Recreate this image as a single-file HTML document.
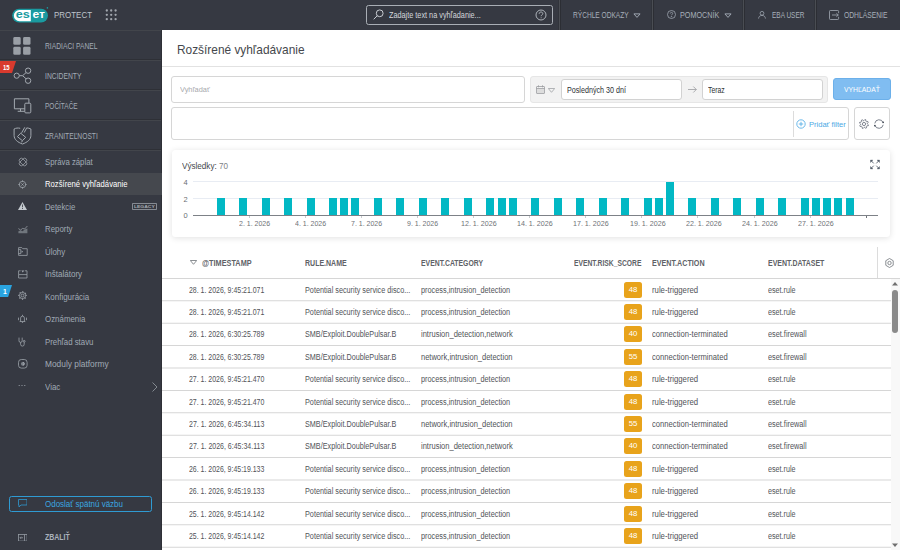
<!DOCTYPE html>
<html><head><meta charset="utf-8">
<style>
*{box-sizing:border-box;margin:0;padding:0}
html,body{width:900px;height:550px;overflow:hidden;background:#fff;font-family:"Liberation Sans",sans-serif}
.abs{position:absolute}
.t{position:absolute;white-space:nowrap;line-height:1}
#top{position:absolute;left:0;top:0;width:900px;height:30px;background:#363942}
#side{position:absolute;left:0;top:30px;width:162px;height:520px;background:#363942}
.tb{color:#a7afb9;font-size:8.8px}
.vd{position:absolute;top:0;width:1px;height:30px;background:#4a4d53;box-shadow:1px 0 0 #2c2e34,-1px 0 0 #31343b}
.sep{position:absolute;left:0;width:161px;height:1px;background:#2e3036}
.mi{color:#a3acb6;font-size:8.4px}
.si{color:#a0aab5;font-size:8.8px}
.ic{position:absolute}
.row{position:absolute;left:162px;width:729px;height:1px;background:#d6d6d6}
.cell{position:absolute;white-space:nowrap;line-height:1;font-size:8.3px;color:#515358}
.hd{position:absolute;white-space:nowrap;line-height:1;font-size:8.3px;font-weight:bold;color:#606267}
.badge{position:absolute;left:624px;width:18px;height:16px;border-radius:2.5px;background:#e8a31b;color:#fff;font-size:7.8px;text-align:center;line-height:16px}
.bar{position:absolute;width:8px;background:#02b8c4}
.xl{position:absolute;white-space:nowrap;line-height:1;font-size:7.3px;color:#6f7277;top:220.3px}
</style></head><body>
<!-- TOP BAR -->
<div id="top">
  <!-- eset logo -->
  <svg class="ic" style="left:12px;top:6.5px" width="37" height="16" viewBox="0 0 37 16">
    <rect x="0.2" y="1.7" width="35.8" height="13.8" rx="6.9" fill="#1a9aa0"/>
    <path d="M7.4 3.1H18.8V14.2H7.4A5.55 5.55 0 0 1 7.4 3.1z" fill="#fff"/>
    <circle cx="35.4" cy="0.9" r="0.8" fill="#1a9aa0"/>
    <text x="3.8" y="11.4" font-family="Liberation Sans" font-weight="bold" font-size="11.5" fill="#1a9aa0" textLength="14.1" lengthAdjust="spacingAndGlyphs">es</text>
    <text x="20.4" y="11.4" font-family="Liberation Sans" font-weight="bold" font-size="11.5" fill="#fff" textLength="12.6" lengthAdjust="spacingAndGlyphs">eт</text>
  </svg>
  <div class="t tb" style="transform:scaleX(0.9254);transform-origin:0 0;left:53.7px;top:10.8px;font-size:8.6px;color:#bfc4cb">PROTECT</div>
  <svg class="ic" style="left:105px;top:9px" width="12" height="12" viewBox="0 0 12 12" fill="#a2a7ae"><circle cx="1.8" cy="1.50" r="1.15"/><circle cx="6.2" cy="1.50" r="1.15"/><circle cx="10.6" cy="1.50" r="1.15"/><circle cx="1.8" cy="5.85" r="1.15"/><circle cx="6.2" cy="5.85" r="1.15"/><circle cx="10.6" cy="5.85" r="1.15"/><circle cx="1.8" cy="10.20" r="1.15"/><circle cx="6.2" cy="10.20" r="1.15"/><circle cx="10.6" cy="10.20" r="1.15"/></svg>
  <!-- search -->
  <div class="abs" style="left:366px;top:5px;width:187px;height:20px;border:1px solid #a9aeb5;border-radius:2.5px"></div>
  <svg class="ic" style="left:373px;top:8.5px" width="11" height="11" viewBox="0 0 11 11" fill="none" stroke="#c8ccd2" stroke-width="1">
    <circle cx="6.7" cy="4.3" r="3.4"/><path d="M4.3 6.7L0.7 10.3"/>
  </svg>
  <div class="t tb" style="transform:scaleX(0.8288);transform-origin:0 0;left:389px;top:11px;color:#d3d7dc">Zadajte text na vyhľadanie...</div>
  <svg class="ic" style="left:535px;top:8.8px" width="12" height="12" viewBox="0 0 12 12" fill="none" stroke="#b9bec5" stroke-width=".9"><circle cx="6" cy="6" r="5"/><path d="M4.2 4.8c0-1.1.8-1.8 1.8-1.8s1.8.7 1.8 1.6c0 1.3-1.7 1.3-1.7 2.6"/><circle cx="6.1" cy="8.8" r=".5" fill="#b9bec5" stroke="none"/></svg>
  <div class="vd" style="left:559px"></div>
  <div class="t tb" style="transform:scaleX(0.7495);transform-origin:0 0;left:572.7px;top:11px">RÝCHLE ODKAZY</div>
  <svg class="ic" style="left:632.5px;top:12.5px" width="8" height="6" viewBox="0 0 8 6" fill="none" stroke="#9ea6b0" stroke-width="1"><path d="M.9 .9h6.2L4 4.4z"/></svg>
  <div class="vd" style="left:652px"></div>
  <svg class="ic" style="left:666.5px;top:10.3px" width="9" height="9" viewBox="0 0 9 9" fill="none" stroke="#9ea6b0" stroke-width=".8">
    <circle cx="4.5" cy="4.5" r="4"/><path d="M3.3 3.5c0-.7.5-1.1 1.2-1.1s1.2.4 1.2 1c0 .9-1.1.9-1.1 1.8"/><circle cx="4.5" cy="6.6" r=".3" fill="#b4bcc6"/>
  </svg>
  <div class="t tb" style="transform:scaleX(0.8183);transform-origin:0 0;left:680.4px;top:11px">POMOCNÍK</div>
  <svg class="ic" style="left:723.5px;top:12.5px" width="8" height="6" viewBox="0 0 8 6" fill="none" stroke="#9ea6b0" stroke-width="1"><path d="M.9 .9h6.2L4 4.4z"/></svg>
  <div class="vd" style="left:743px"></div>
  <svg class="ic" style="left:758px;top:11px" width="8" height="8" viewBox="0 0 8 8" fill="none" stroke="#a3abb5" stroke-width=".75"><circle cx="4" cy="2.3" r="1.9"/><path d="M.6 7.6c0-1.9 1.4-3.2 3.4-3.2s3.4 1.3 3.4 3.2"/></svg>
  <div class="t tb" style="transform:scaleX(0.7361);transform-origin:0 0;left:771.6px;top:11px">EBA USER</div>
  <div class="vd" style="left:815px"></div>
  <svg class="ic" style="left:828.7px;top:9.8px" width="11" height="10" viewBox="0 0 11 10" fill="none" stroke="#a3abb5" stroke-width=".8"><path d="M9.6 3.2V1.3a.8.8 0 0 0-.8-.8H1.3a.8.8 0 0 0-.8.8v7.4a.8.8 0 0 0 .8.8h7.5a.8.8 0 0 0 .8-.8V6.8"/><path d="M3 5h6.3M7.4 3.3L9.3 5 7.4 6.7"/></svg>
  <div class="t tb" style="transform:scaleX(0.7669);transform-origin:0 0;left:843.8px;top:11px">ODHLÁSENIE</div>
</div>

<!-- SIDEBAR -->
<div id="side"></div>
<div class="sep" style="top:30px;background:#42454b"></div>
<div class="sep" style="top:59px"></div><div class="sep" style="top:60px;background:#42454b"></div>
<div class="sep" style="top:89px"></div><div class="sep" style="top:90px;background:#42454b"></div>
<div class="sep" style="top:119px"></div><div class="sep" style="top:120px;background:#42454b"></div>
<div class="sep" style="top:149px"></div><div class="sep" style="top:150px;background:#42454b"></div>
<div class="abs" style="left:161px;top:30px;width:1px;height:520px;background:#2e3036"></div>
<!-- main items -->
<svg class="ic" style="left:13.2px;top:37px" width="18" height="18" viewBox="0 0 18 18" fill="#9a9fa6">
  <rect x="0.3" y="0" width="7.4" height="7.8" rx="1.4"/><rect x="10.1" y="0" width="7.4" height="7.8" rx="1.4"/><rect x="0.3" y="9.8" width="7.4" height="8" rx="1.4"/><rect x="10.1" y="9.8" width="7.4" height="8" rx="1.4"/>
</svg>
<div class="t mi" style="transform:scaleX(0.8019);transform-origin:0 0;left:44.7px;top:41.5px">RIADIACI PANEL</div>
<svg class="ic" style="left:10px;top:64px" width="24" height="24" viewBox="0 0 24 24" fill="none" stroke="#a3a9b0" stroke-width="1">
  <circle cx="6.7" cy="11.7" r="2.6"/><circle cx="18.1" cy="6.7" r="2.7"/><circle cx="18.1" cy="16.7" r="2.7"/><path d="M9.3 11.7h3.3L16.1 8.6M12.6 11.7l3.5 3.1"/>
</svg>
<div class="abs" style="left:0;top:60.9px;width:16px;height:12.2px;background:#d83a2e;clip-path:polygon(0 0,100% 0,75% 100%,0 100%)"></div>
<div class="t" style="left:2.8px;top:64.1px;font-size:7px;font-weight:bold;color:#fff;transform:scaleX(.85);transform-origin:0 0">15</div>
<div class="t mi" style="transform:scaleX(0.8064);transform-origin:0 0;left:44.7px;top:71.5px">INCIDENTY</div>
<svg class="ic" style="left:13px;top:97px" width="19" height="17" viewBox="0 0 19 17" fill="none" stroke="#a3a9b0" stroke-width="1">
  <path d="M11.8 11.8H1.4V1.8h14.5v4.4"/><path d="M7.5 11.8v2.5M4.7 14.3h7"/><rect x="11.8" y="6.2" width="6" height="9.7" rx="1"/>
</svg>
<div class="t mi" style="transform:scaleX(0.7748);transform-origin:0 0;left:44.7px;top:101.5px">POČÍTAČE</div>
<svg class="ic" style="left:13px;top:126px" width="19" height="19" viewBox="0 0 19 19" fill="none" stroke="#a3a9b0" stroke-width="1">
  <path d="M7.2 2.3C5 1.8 2.8 2 1.1 3v6.4c0 4.2 3.6 6.9 8.4 8.6 4.8-1.7 8.4-4.4 8.4-8.6V3c-1.3-.7-2.8-1-4.2-1.1L11.2 6.5"/><path d="M11.8 1.3L8.6 6.8"/>
  <path d="M4.4 10.6L7.7 7.2l5 4.1-3.3 3.4z"/><path d="M9.4 14.7l-.8 1.6"/>
</svg>
<div class="t mi" style="transform:scaleX(0.7991);transform-origin:0 0;left:44.7px;top:131.5px">ZRANITEĽNOSTI</div>

<!-- selected -->
<div class="abs" style="left:0;top:173.4px;width:162px;height:22px;background:#45484e"></div>

<!-- sub items -->
<svg class="ic" style="left:17.5px;top:156.5px" width="10" height="10" viewBox="0 0 10 10" fill="none" stroke="#a3a9b0" stroke-width=".7"><rect x=".6" y="2.9" width="8.8" height="4.2" rx="2.1" transform="rotate(45 5 5)"/><rect x=".6" y="2.9" width="8.8" height="4.2" rx="2.1" transform="rotate(-45 5 5)"/></svg>
<div class="t si" style="transform:scaleX(0.8867);transform-origin:0 0;left:44.8px;top:158px">Správa záplat</div>
<svg class="ic" style="left:17.8px;top:179.5px" width="9" height="9" viewBox="0 0 9 9" fill="none" stroke="#a3a9b0" stroke-width=".75"><circle cx="4.5" cy="4.5" r="3.2"/><path d="M4.5 .3v1.6M4.5 7.1v1.6M.3 4.5h1.6M7.1 4.5h1.6M3.4 3.4l2.2 2.2M5.6 3.4L3.4 5.6"/></svg>
<div class="t si" style="transform:scaleX(0.8730);transform-origin:0 0;left:44.8px;top:180px;color:#fff">Rozšírené vyhľadávanie</div>
<svg class="ic" style="left:18px;top:202px" width="9" height="8" viewBox="0 0 9 8" fill="#c4c9cf"><path d="M4.5 0L9 8H0z"/><path d="M4.1 2.5h.8v2.8h-.8zM4.1 6h.8v.9h-.8z" fill="#34373d"/></svg>
<div class="t si" style="transform:scaleX(0.8851);transform-origin:0 0;left:44.8px;top:202.5px">Detekcie</div>
<div class="abs" style="left:132px;top:203px;width:25px;height:7.2px;border:.8px solid #858a92;border-radius:.8px"></div>
<div class="t" style="transform:scaleX(1.1313);transform-origin:0 0;left:133.8px;top:204.9px;font-size:4.4px;font-weight:bold;color:#a6abb2">LEGACY</div>
<svg class="ic" style="left:17.8px;top:224.5px" width="10" height="9" viewBox="0 0 10 9" fill="none" stroke="#a3a9b0" stroke-width=".7"><path d="M.4 3.6l2.2 1.4 2-1.6 2 .6 2.8-3"/><path d="M.4 8.3V6.2l2.2-1 2 1 2-1.6 2.8-1.2v4.9z" fill="#70767d" stroke="none"/></svg>
<div class="t si" style="transform:scaleX(0.8925);transform-origin:0 0;left:44.8px;top:225px">Reporty</div>
<svg class="ic" style="left:17.8px;top:247px" width="10" height="9" viewBox="0 0 10 9" fill="none" stroke="#a3a9b0" stroke-width=".75"><path d="M.6 .6h3.2l1 1.1h4.4v6.7H.6z"/><path d="M.6 2.6h2.2v4H.6"/><path d="M3.6 3.6v2.2l1.5-1.1z" fill="#a3a9b0" stroke="none"/></svg>
<div class="t si" style="transform:scaleX(0.8978);transform-origin:0 0;left:44.8px;top:247.5px">Úlohy</div>
<svg class="ic" style="left:17.8px;top:269.5px" width="10" height="9" viewBox="0 0 10 9" fill="none" stroke="#a3a9b0" stroke-width=".75"><path d="M.6 4.6V.8h2M6.8 .8h2.2v3.8M.6 4.6h8.4v3.4H.6z"/><path d="M3.4 .6h2.8L4.8 2.4z" fill="#a3a9b0" stroke="none"/></svg>
<div class="t si" style="transform:scaleX(0.9139);transform-origin:0 0;left:44.8px;top:270px">Inštalátory</div>
<div class="abs" style="left:0;top:284.9px;width:12px;height:12.4px;background:#2aa4e0;clip-path:polygon(0 0,100% 0,67% 100%,0 100%)"></div>
<div class="t" style="left:3.1px;top:288.6px;font-size:6.8px;font-weight:bold;color:#fff">1</div>
<svg class="ic" style="left:17.5px;top:291.3px" width="9" height="9" viewBox="0 0 9 9" fill="none" stroke="#a3a9b0"><circle cx="4.5" cy="4.5" r="3.1" stroke-width=".75"/><circle cx="4.5" cy="4.5" r="3.7" stroke-width="1.1" stroke-dasharray="1.1 1.806" transform="rotate(-11 4.5 4.5)"/><circle cx="4.5" cy="4.5" r="1.4" stroke-width=".75"/></svg>
<div class="t si" style="transform:scaleX(0.9058);transform-origin:0 0;left:44.8px;top:292.5px">Konfigurácia</div>
<svg class="ic" style="left:18px;top:313.5px" width="9" height="9" viewBox="0 0 9 9" fill="none" stroke="#a3a9b0" stroke-width=".75"><path d="M2.6 6.9V4.1a1.9 1.9 0 0 1 3.8 0v2.8l.8.6H1.8z"/><path d="M4.5 .8v1.3M3.9 8.4h1.2M.5 3.6v2.6M8.5 3.6v2.6"/></svg>
<div class="t si" style="transform:scaleX(0.8978);transform-origin:0 0;left:44.8px;top:315px">Oznámenia</div>
<svg class="ic" style="left:18px;top:336.5px" width="9" height="10" viewBox="0 0 9 10" fill="none" stroke="#a3a9b0" stroke-width=".75"><path d="M1 .6v3.2a1.6 1.6 0 0 0 3.2 0V.6M2.6 5.4v1.9a1.8 1.8 0 0 0 3.6 0V5.2"/><circle cx="6.2" cy="4.3" r=".9"/></svg>
<div class="t si" style="transform:scaleX(0.8896);transform-origin:0 0;left:44.8px;top:337.5px">Prehľad stavu</div>
<svg class="ic" style="left:17.6px;top:358.7px" width="10" height="10" viewBox="0 0 10 10" fill="none" stroke="#a3a9b0" stroke-width=".75"><rect x=".5" y=".5" width="8.6" height="8.6" rx="2.8"/><circle cx="4.8" cy="4.8" r="1.9" fill="#7d838b" stroke="none"/><path d="M4.9 3.4a1.3 1.3 0 0 1 0 2.8" stroke="#c5cad0" stroke-width=".6"/></svg>
<div class="t si" style="transform:scaleX(0.9510);transform-origin:0 0;left:44.8px;top:360px">Moduly platformy</div>
<svg class="ic" style="left:18px;top:384px" width="8" height="3" viewBox="0 0 8 3" fill="#a3a9b0"><circle cx="1.2" cy="1.5" r=".6"/><circle cx="4" cy="1.5" r=".6"/><circle cx="6.8" cy="1.5" r=".6"/></svg>
<div class="t si" style="transform:scaleX(0.9017);transform-origin:0 0;left:44.8px;top:382.5px">Viac</div>
<svg class="ic" style="left:151.5px;top:381.5px" width="6" height="10" viewBox="0 0 6 10" fill="none" stroke="#8d939a" stroke-width=".9"><path d="M.5 .5L5 5 .5 9.5"/></svg>

<!-- feedback -->
<div class="abs" style="left:9.2px;top:496.2px;width:143px;height:15.8px;border:1px solid #2f9bd3;border-radius:2.5px"></div>
<svg class="ic" style="left:17.8px;top:499.4px" width="9.5" height="8.5" viewBox="0 0 9.5 8.5" fill="none" stroke="#2f9bd3" stroke-width=".8"><path d="M.5 .5h8.5v5.5H3L1 8V6H.5z"/></svg>
<div class="t" style="transform:scaleX(0.9075);transform-origin:0 0;left:44.9px;top:500px;font-size:8.8px;color:#3ba7e0">Odoslať spätnú väzbu</div>
<!-- collapse -->
<svg class="ic" style="left:17.8px;top:533.8px" width="9.5" height="7.5" viewBox="0 0 9.5 7.5" fill="none" stroke="#959ba3" stroke-width=".8"><rect x=".4" y=".4" width="8.7" height="6.7"/><path d="M6.5 .4v6.7M2 3.75h3M3 2.7L2 3.75 3 4.8"/></svg>
<div class="t" style="transform:scaleX(0.8327);transform-origin:0 0;left:44.9px;top:533px;font-size:8.4px;font-weight:bold;color:#aab2bc">ZBALIŤ</div>

<!-- MAIN -->
<div class="abs" style="left:162px;top:30px;width:738px;height:520px;background:#fff"></div>
<div class="t" style="transform:scaleX(0.9130);transform-origin:0 0;left:176.5px;top:42.5px;font-size:13px;color:#45474c">Rozšírené vyhľadávanie</div>
<div class="abs" style="left:162px;top:66px;width:738px;height:1px;background:#e2e2e2"></div>

<div class="abs" style="left:171px;top:76px;width:353.5px;height:26.5px;border:1px solid #d6d6d6;border-radius:3px"></div>
<div class="t" style="transform:scaleX(0.9723);transform-origin:0 0;left:180px;top:86px;font-size:7.6px;color:#a7a9ad">Vyhľadať</div>

<div class="abs" style="left:530px;top:76px;width:298px;height:26.5px;background:#f2f2f2;border:1px solid #e6e6e6;border-radius:3px"></div>
<svg class="ic" style="left:536px;top:85px" width="9" height="9" viewBox="0 0 9 9" fill="none" stroke="#9a9ca0" stroke-width=".8"><rect x=".5" y="1.5" width="8" height="7" rx=".5"/><path d="M.5 3.5h8M2.5 .3v2M6.5 .3v2"/><rect x="1" y="4" width="7" height="4" fill="#ddd" stroke="none"/></svg>
<svg class="ic" style="left:548px;top:87.5px" width="7" height="5" viewBox="0 0 7 5" fill="none" stroke="#a0a2a6" stroke-width=".8"><path d="M.3 .5h6.4L3.5 4.3z"/></svg>
<div class="abs" style="left:561px;top:79.3px;width:121px;height:20.3px;background:#fff;border:1px solid #d2d2d2;border-radius:3px"></div>
<div class="t" style="transform:scaleX(0.8343);transform-origin:0 0;left:566.5px;top:85.8px;font-size:8.6px;color:#2d2f33">Posledných 30 dní</div>
<svg class="ic" style="left:688px;top:86px" width="9" height="7" viewBox="0 0 9 7" fill="none" stroke="#9a9ca0" stroke-width=".8"><path d="M0 3.5h8.3M5.3.5l3 3-3 3"/></svg>
<div class="abs" style="left:702px;top:79.3px;width:120.5px;height:20.3px;background:#fff;border:1px solid #d2d2d2;border-radius:3px"></div>
<div class="t" style="transform:scaleX(0.7946);transform-origin:0 0;left:708px;top:85.8px;font-size:8.6px;color:#2d2f33">Teraz</div>

<div class="abs" style="left:832.5px;top:78.3px;width:58px;height:22.2px;background:#80bdf1;border:1px solid #6cb0ea;border-radius:3px"></div>
<div class="t" style="transform:scaleX(0.8929);transform-origin:0 0;left:843.5px;top:85.5px;font-size:7.6px;color:#fff">VYHĽADAŤ</div>

<div class="abs" style="left:171px;top:107px;width:677.5px;height:32.5px;border:1px solid #d6d6d6;border-radius:3px"></div>
<div class="abs" style="left:793px;top:111px;width:1px;height:26px;background:#dcdcdc"></div>
<svg class="ic" style="left:796px;top:118.7px" width="10" height="10" viewBox="0 0 10 10" fill="none" stroke="#4aa8e4" stroke-width=".8"><circle cx="5" cy="5" r="4.2"/><path d="M5 2.8v4.4M2.8 5h4.4"/></svg>
<div class="t" style="transform:scaleX(0.9676);transform-origin:0 0;left:808.5px;top:120.5px;font-size:7.8px;color:#4aa8e4">Pridať filter</div>
<div class="abs" style="left:854px;top:107px;width:36px;height:32.5px;border:1px solid #d6d6d6;border-radius:3px"></div>
<svg class="ic" style="left:858.4px;top:117.5px" width="12" height="12" viewBox="0 0 12 12" fill="none" stroke="#5b6270" stroke-width=".75"><path d="M6.00 2.60L6.90 1.49L7.76 1.75L7.89 3.17L8.40 3.60L9.82 3.44L10.25 4.24L9.33 5.34L9.40 6.00L10.51 6.90L10.25 7.76L8.83 7.89L8.40 8.40L8.56 9.82L7.76 10.25L6.66 9.33L6.00 9.40L5.10 10.51L4.24 10.25L4.11 8.83L3.60 8.40L2.18 8.56L1.75 7.76L2.67 6.66L2.60 6.00L1.49 5.10L1.75 4.24L3.17 4.11L3.60 3.60L3.44 2.18L4.24 1.75L5.34 2.67z"/><circle cx="6" cy="6" r="1.6"/></svg>
<svg class="ic" style="left:873.4px;top:117.5px" width="12" height="12" viewBox="0 0 12 12" fill="none" stroke="#5b6270" stroke-width=".8"><path d="M1.8 5.4A4.3 4.3 0 0 1 10.1 4.6M10.2 6.8A4.3 4.3 0 0 1 1.9 7.4"/><rect x="9.4" y="3.6" width="1.5" height="1.5" fill="#3f4652" stroke="none"/><rect x="1.1" y="6.9" width="1.5" height="1.5" fill="#3f4652" stroke="none"/></svg>

<!-- CHART CARD -->
<div class="abs" style="left:172px;top:150px;width:718px;height:86.5px;border-radius:3.5px;background:#fff;box-shadow:0 1px 6px rgba(0,0,0,.12)"></div>
<div class="t" style="transform:scaleX(0.9220);transform-origin:0 0;left:181.7px;top:162px;font-size:8.8px;color:#44464b">Výsledky: <span style="color:#808287">70</span></div>
<svg class="ic" style="left:866px;top:156px" width="18" height="18" viewBox="0 0 18 18" fill="#56606c" stroke="#56606c" stroke-width=".9"><path d="M5.2 4.7L7.7 7.4M12.8 4.7L10.3 7.4M5.2 12.3L7.7 9.7M12.8 12.3L10.3 9.7" fill="none"/><path d="M4.5 4.1h2.4L4.5 6.5z M13.5 4.1h-2.4l2.4 2.4z M4.5 12.9h2.4L4.5 10.5z M13.5 12.9h-2.4l2.4-2.4z" stroke-width=".4"/></svg>
<div class="t" style="left:183.5px;top:179px;font-size:7.5px;color:#6b6e73">4</div>
<div class="t" style="left:183.5px;top:195.5px;font-size:7.5px;color:#6b6e73">2</div>
<div class="t" style="left:183.5px;top:211.5px;font-size:7.5px;color:#6b6e73">0</div>
<div class="abs" style="left:192.5px;top:181px;width:685.5px;height:1px;background:#e8ecf3"></div>
<div class="abs" style="left:192.5px;top:198px;width:685.5px;height:1px;background:#e8ecf3"></div>
<div class="bar" style="left:216.70px;top:198.2px;height:16.70px"></div>
<div class="bar" style="left:239.16px;top:198.2px;height:16.70px"></div>
<div class="bar" style="left:261.63px;top:198.2px;height:16.70px"></div>
<div class="bar" style="left:284.09px;top:198.2px;height:16.70px"></div>
<div class="bar" style="left:306.56px;top:198.2px;height:16.70px"></div>
<div class="bar" style="left:329.02px;top:198.2px;height:16.70px"></div>
<div class="bar" style="left:340.25px;top:198.2px;height:16.70px"></div>
<div class="bar" style="left:351.48px;top:198.2px;height:16.70px"></div>
<div class="bar" style="left:373.95px;top:198.2px;height:16.70px"></div>
<div class="bar" style="left:396.41px;top:198.2px;height:16.70px"></div>
<div class="bar" style="left:418.88px;top:198.2px;height:16.70px"></div>
<div class="bar" style="left:441.34px;top:198.2px;height:16.70px"></div>
<div class="bar" style="left:463.80px;top:198.2px;height:16.70px"></div>
<div class="bar" style="left:486.27px;top:198.2px;height:16.70px"></div>
<div class="bar" style="left:497.50px;top:198.2px;height:16.70px"></div>
<div class="bar" style="left:508.73px;top:198.2px;height:16.70px"></div>
<div class="bar" style="left:531.20px;top:198.2px;height:16.70px"></div>
<div class="bar" style="left:553.66px;top:198.2px;height:16.70px"></div>
<div class="bar" style="left:576.12px;top:198.2px;height:16.70px"></div>
<div class="bar" style="left:598.59px;top:198.2px;height:16.70px"></div>
<div class="bar" style="left:621.05px;top:198.2px;height:16.70px"></div>
<div class="bar" style="left:643.52px;top:198.2px;height:16.70px"></div>
<div class="bar" style="left:654.75px;top:198.2px;height:16.70px"></div>
<div class="bar" style="left:665.98px;top:181.7px;height:33.20px"></div>
<div class="bar" style="left:688.44px;top:198.2px;height:16.70px"></div>
<div class="bar" style="left:710.91px;top:198.2px;height:16.70px"></div>
<div class="bar" style="left:733.37px;top:198.2px;height:16.70px"></div>
<div class="bar" style="left:755.84px;top:198.2px;height:16.70px"></div>
<div class="bar" style="left:778.30px;top:198.2px;height:16.70px"></div>
<div class="bar" style="left:800.76px;top:198.2px;height:16.70px"></div>
<div class="bar" style="left:812.00px;top:198.2px;height:16.70px"></div>
<div class="bar" style="left:823.23px;top:198.2px;height:16.70px"></div>
<div class="bar" style="left:834.46px;top:198.2px;height:16.70px"></div>
<div class="bar" style="left:845.69px;top:198.2px;height:16.70px"></div>
<div class="abs" style="left:192.5px;top:214.5px;width:685.5px;height:1px;background:#7d8187"></div>
<div class="xl" style="transform:scaleX(0.9578);transform-origin:0 0;left:239.05px">2. 1. 2026</div>
<div class="abs" style="left:248.60px;top:215.5px;width:1px;height:2px;background:#c9cbce"></div>
<div class="xl" style="transform:scaleX(0.9578);transform-origin:0 0;left:295.15px">4. 1. 2026</div>
<div class="abs" style="left:304.70px;top:215.5px;width:1px;height:2px;background:#c9cbce"></div>
<div class="xl" style="transform:scaleX(0.9578);transform-origin:0 0;left:351.25px">7. 1. 2026</div>
<div class="abs" style="left:360.80px;top:215.5px;width:1px;height:2px;background:#c9cbce"></div>
<div class="xl" style="transform:scaleX(0.9578);transform-origin:0 0;left:407.35px">9. 1. 2026</div>
<div class="abs" style="left:416.90px;top:215.5px;width:1px;height:2px;background:#c9cbce"></div>
<div class="xl" style="transform:scaleX(0.9745);transform-origin:0 0;left:461.20px">12. 1. 2026</div>
<div class="abs" style="left:473.00px;top:215.5px;width:1px;height:2px;background:#c9cbce"></div>
<div class="xl" style="transform:scaleX(0.9745);transform-origin:0 0;left:517.30px">14. 1. 2026</div>
<div class="abs" style="left:529.10px;top:215.5px;width:1px;height:2px;background:#c9cbce"></div>
<div class="xl" style="transform:scaleX(0.9745);transform-origin:0 0;left:573.40px">17. 1. 2026</div>
<div class="abs" style="left:585.20px;top:215.5px;width:1px;height:2px;background:#c9cbce"></div>
<div class="xl" style="transform:scaleX(0.9745);transform-origin:0 0;left:629.50px">19. 1. 2026</div>
<div class="abs" style="left:641.30px;top:215.5px;width:1px;height:2px;background:#c9cbce"></div>
<div class="xl" style="transform:scaleX(0.9745);transform-origin:0 0;left:685.60px">22. 1. 2026</div>
<div class="abs" style="left:697.40px;top:215.5px;width:1px;height:2px;background:#c9cbce"></div>
<div class="xl" style="transform:scaleX(0.9745);transform-origin:0 0;left:741.70px">24. 1. 2026</div>
<div class="abs" style="left:753.50px;top:215.5px;width:1px;height:2px;background:#c9cbce"></div>
<div class="xl" style="transform:scaleX(0.9745);transform-origin:0 0;left:797.80px">27. 1. 2026</div>
<div class="abs" style="left:809.60px;top:215.5px;width:1px;height:2px;background:#c9cbce"></div>
<div class="abs" style="left:866px;top:215.5px;width:1px;height:2.5px;background:#6f7378"></div>

<!-- TABLE -->
<div class="abs" style="left:162px;top:278px;width:738px;height:1px;background:#d6d6d6"></div>
<div class="abs" style="left:877px;top:247px;width:1px;height:31px;background:#dcdcdc"></div>
<svg class="ic" style="left:884.5px;top:257.5px" width="9" height="10" viewBox="0 0 9 10" fill="none" stroke="#6f7378" stroke-width=".8"><path d="M4.5.5l3.7 2.2v4.6L4.5 9.5.8 7.3V2.7z"/><circle cx="4.5" cy="5" r="1.7"/></svg>
<svg class="ic" style="left:190.3px;top:259.7px" width="7" height="5" viewBox="0 0 7 5" fill="none" stroke="#6f7378" stroke-width=".8"><path d="M.3 .5h6.4L3.5 4.3z"/></svg>
<div class="hd" style="transform:scaleX(0.8803);transform-origin:0 0;left:201.5px;top:259px">@TIMESTAMP</div>
<div class="hd" style="transform:scaleX(0.8454);transform-origin:0 0;left:305px;top:259px">RULE.NAME</div>
<div class="hd" style="transform:scaleX(0.8249);transform-origin:0 0;left:420.5px;top:259px">EVENT.CATEGORY</div>
<div class="hd" style="transform:scaleX(0.8120);transform-origin:0 0;left:574px;top:259px">EVENT.RISK_SCORE</div>
<div class="hd" style="transform:scaleX(0.8643);transform-origin:0 0;left:651.5px;top:259px">EVENT.ACTION</div>
<div class="hd" style="transform:scaleX(0.8403);transform-origin:0 0;left:767.5px;top:259px">EVENT.DATASET</div>
<div class="cell c1" style="transform:scaleX(0.8370);transform-origin:0 0;left:189px;top:285.60px">28. 1. 2026, 9:45:21.071</div>
<div class="cell c2" style="transform:scaleX(0.8749);transform-origin:0 0;left:305px;top:285.60px">Potential security service disco...</div>
<div class="cell c3" style="transform:scaleX(0.8830);transform-origin:0 0;left:420.5px;top:285.60px">process,intrusion_detection</div>
<div class="badge" style="top:281.60px">48</div>
<div class="cell c5" style="transform:scaleX(0.9340);transform-origin:0 0;left:651.6px;top:285.60px">rule-triggered</div>
<div class="cell c6" style="transform:scaleX(0.8640);transform-origin:0 0;left:767.6px;top:285.60px">eset.rule</div>
<div class="row" style="top:300px;opacity:0.75"></div>
<div class="row" style="top:301px;opacity:0.25"></div>
<div class="cell c1" style="transform:scaleX(0.8370);transform-origin:0 0;left:189px;top:308.00px">28. 1. 2026, 9:45:21.071</div>
<div class="cell c2" style="transform:scaleX(0.8749);transform-origin:0 0;left:305px;top:308.00px">Potential security service disco...</div>
<div class="cell c3" style="transform:scaleX(0.8830);transform-origin:0 0;left:420.5px;top:308.00px">process,intrusion_detection</div>
<div class="badge" style="top:304.00px">48</div>
<div class="cell c5" style="transform:scaleX(0.9340);transform-origin:0 0;left:651.6px;top:308.00px">rule-triggered</div>
<div class="cell c6" style="transform:scaleX(0.8640);transform-origin:0 0;left:767.6px;top:308.00px">eset.rule</div>
<div class="row" style="top:322px;opacity:0.25"></div>
<div class="row" style="top:323px;opacity:0.75"></div>
<div class="cell c1" style="transform:scaleX(0.8370);transform-origin:0 0;left:189px;top:330.40px">28. 1. 2026, 6:30:25.789</div>
<div class="cell c2" style="transform:scaleX(0.8721);transform-origin:0 0;left:305px;top:330.40px">SMB/Exploit.DoublePulsar.B</div>
<div class="cell c3" style="transform:scaleX(0.9078);transform-origin:0 0;left:420.5px;top:330.40px">intrusion_detection,network</div>
<div class="badge" style="top:326.40px">40</div>
<div class="cell c5" style="transform:scaleX(0.9219);transform-origin:0 0;left:651.6px;top:330.40px">connection-terminated</div>
<div class="cell c6" style="transform:scaleX(0.8810);transform-origin:0 0;left:767.6px;top:330.40px">eset.firewall</div>
<div class="row" style="top:345px;opacity:1.00"></div>
<div class="cell c1" style="transform:scaleX(0.8370);transform-origin:0 0;left:189px;top:352.80px">28. 1. 2026, 6:30:25.789</div>
<div class="cell c2" style="transform:scaleX(0.8721);transform-origin:0 0;left:305px;top:352.80px">SMB/Exploit.DoublePulsar.B</div>
<div class="cell c3" style="transform:scaleX(0.9058);transform-origin:0 0;left:420.5px;top:352.80px">network,intrusion_detection</div>
<div class="badge" style="top:348.80px">55</div>
<div class="cell c5" style="transform:scaleX(0.9219);transform-origin:0 0;left:651.6px;top:352.80px">connection-terminated</div>
<div class="cell c6" style="transform:scaleX(0.8810);transform-origin:0 0;left:767.6px;top:352.80px">eset.firewall</div>
<div class="row" style="top:367px;opacity:0.50"></div>
<div class="row" style="top:368px;opacity:0.50"></div>
<div class="cell c1" style="transform:scaleX(0.8370);transform-origin:0 0;left:189px;top:375.20px">27. 1. 2026, 9:45:21.470</div>
<div class="cell c2" style="transform:scaleX(0.8749);transform-origin:0 0;left:305px;top:375.20px">Potential security service disco...</div>
<div class="cell c3" style="transform:scaleX(0.8830);transform-origin:0 0;left:420.5px;top:375.20px">process,intrusion_detection</div>
<div class="badge" style="top:371.20px">48</div>
<div class="cell c5" style="transform:scaleX(0.9340);transform-origin:0 0;left:651.6px;top:375.20px">rule-triggered</div>
<div class="cell c6" style="transform:scaleX(0.8640);transform-origin:0 0;left:767.6px;top:375.20px">eset.rule</div>
<div class="row" style="top:390px;opacity:1.00"></div>
<div class="cell c1" style="transform:scaleX(0.8370);transform-origin:0 0;left:189px;top:397.60px">27. 1. 2026, 9:45:21.470</div>
<div class="cell c2" style="transform:scaleX(0.8749);transform-origin:0 0;left:305px;top:397.60px">Potential security service disco...</div>
<div class="cell c3" style="transform:scaleX(0.8830);transform-origin:0 0;left:420.5px;top:397.60px">process,intrusion_detection</div>
<div class="badge" style="top:393.60px">48</div>
<div class="cell c5" style="transform:scaleX(0.9340);transform-origin:0 0;left:651.6px;top:397.60px">rule-triggered</div>
<div class="cell c6" style="transform:scaleX(0.8640);transform-origin:0 0;left:767.6px;top:397.60px">eset.rule</div>
<div class="row" style="top:412px;opacity:0.75"></div>
<div class="row" style="top:413px;opacity:0.25"></div>
<div class="cell c1" style="transform:scaleX(0.8427);transform-origin:0 0;left:189px;top:420.00px">27. 1. 2026, 6:45:34.113</div>
<div class="cell c2" style="transform:scaleX(0.8721);transform-origin:0 0;left:305px;top:420.00px">SMB/Exploit.DoublePulsar.B</div>
<div class="cell c3" style="transform:scaleX(0.9058);transform-origin:0 0;left:420.5px;top:420.00px">network,intrusion_detection</div>
<div class="badge" style="top:416.00px">55</div>
<div class="cell c5" style="transform:scaleX(0.9219);transform-origin:0 0;left:651.6px;top:420.00px">connection-terminated</div>
<div class="cell c6" style="transform:scaleX(0.8810);transform-origin:0 0;left:767.6px;top:420.00px">eset.firewall</div>
<div class="row" style="top:434px;opacity:0.25"></div>
<div class="row" style="top:435px;opacity:0.75"></div>
<div class="cell c1" style="transform:scaleX(0.8427);transform-origin:0 0;left:189px;top:442.40px">27. 1. 2026, 6:45:34.113</div>
<div class="cell c2" style="transform:scaleX(0.8721);transform-origin:0 0;left:305px;top:442.40px">SMB/Exploit.DoublePulsar.B</div>
<div class="cell c3" style="transform:scaleX(0.9078);transform-origin:0 0;left:420.5px;top:442.40px">intrusion_detection,network</div>
<div class="badge" style="top:438.40px">40</div>
<div class="cell c5" style="transform:scaleX(0.9219);transform-origin:0 0;left:651.6px;top:442.40px">connection-terminated</div>
<div class="cell c6" style="transform:scaleX(0.8810);transform-origin:0 0;left:767.6px;top:442.40px">eset.firewall</div>
<div class="row" style="top:457px;opacity:1.00"></div>
<div class="cell c1" style="transform:scaleX(0.8370);transform-origin:0 0;left:189px;top:464.80px">26. 1. 2026, 9:45:19.133</div>
<div class="cell c2" style="transform:scaleX(0.8749);transform-origin:0 0;left:305px;top:464.80px">Potential security service disco...</div>
<div class="cell c3" style="transform:scaleX(0.8830);transform-origin:0 0;left:420.5px;top:464.80px">process,intrusion_detection</div>
<div class="badge" style="top:460.80px">48</div>
<div class="cell c5" style="transform:scaleX(0.9340);transform-origin:0 0;left:651.6px;top:464.80px">rule-triggered</div>
<div class="cell c6" style="transform:scaleX(0.8640);transform-origin:0 0;left:767.6px;top:464.80px">eset.rule</div>
<div class="row" style="top:479px;opacity:0.50"></div>
<div class="row" style="top:480px;opacity:0.50"></div>
<div class="cell c1" style="transform:scaleX(0.8370);transform-origin:0 0;left:189px;top:487.20px">26. 1. 2026, 9:45:19.133</div>
<div class="cell c2" style="transform:scaleX(0.8749);transform-origin:0 0;left:305px;top:487.20px">Potential security service disco...</div>
<div class="cell c3" style="transform:scaleX(0.8830);transform-origin:0 0;left:420.5px;top:487.20px">process,intrusion_detection</div>
<div class="badge" style="top:483.20px">48</div>
<div class="cell c5" style="transform:scaleX(0.9340);transform-origin:0 0;left:651.6px;top:487.20px">rule-triggered</div>
<div class="cell c6" style="transform:scaleX(0.8640);transform-origin:0 0;left:767.6px;top:487.20px">eset.rule</div>
<div class="row" style="top:502px;opacity:1.00"></div>
<div class="cell c1" style="transform:scaleX(0.8370);transform-origin:0 0;left:189px;top:509.60px">25. 1. 2026, 9:45:14.142</div>
<div class="cell c2" style="transform:scaleX(0.8749);transform-origin:0 0;left:305px;top:509.60px">Potential security service disco...</div>
<div class="cell c3" style="transform:scaleX(0.8830);transform-origin:0 0;left:420.5px;top:509.60px">process,intrusion_detection</div>
<div class="badge" style="top:505.60px">48</div>
<div class="cell c5" style="transform:scaleX(0.9340);transform-origin:0 0;left:651.6px;top:509.60px">rule-triggered</div>
<div class="cell c6" style="transform:scaleX(0.8640);transform-origin:0 0;left:767.6px;top:509.60px">eset.rule</div>
<div class="row" style="top:524px;opacity:0.75"></div>
<div class="row" style="top:525px;opacity:0.25"></div>
<div class="cell c1" style="transform:scaleX(0.8370);transform-origin:0 0;left:189px;top:532.00px">25. 1. 2026, 9:45:14.142</div>
<div class="cell c2" style="transform:scaleX(0.8749);transform-origin:0 0;left:305px;top:532.00px">Potential security service disco...</div>
<div class="cell c3" style="transform:scaleX(0.8830);transform-origin:0 0;left:420.5px;top:532.00px">process,intrusion_detection</div>
<div class="badge" style="top:528.00px">48</div>
<div class="cell c5" style="transform:scaleX(0.9340);transform-origin:0 0;left:651.6px;top:532.00px">rule-triggered</div>
<div class="cell c6" style="transform:scaleX(0.8640);transform-origin:0 0;left:767.6px;top:532.00px">eset.rule</div>
<div class="row" style="top:546px;opacity:0.25"></div>
<div class="row" style="top:547px;opacity:0.75"></div>
<div class="abs" style="left:891px;top:279px;width:9px;height:271px;background:#f8f8f8"></div>
<svg class="ic" style="left:892.3px;top:282.3px" width="6" height="4" viewBox="0 0 6 4" fill="#6f6f6f"><path d="M3 0L6 3.5H0z"/></svg>
<div class="abs" style="left:892.3px;top:290px;width:5.8px;height:43.3px;border-radius:3px;background:#8a8a8a"></div>
<svg class="ic" style="left:892.3px;top:543px" width="6" height="4" viewBox="0 0 6 4" fill="#6f6f6f"><path d="M0 .5h6L3 4z"/></svg>
</body></html>
